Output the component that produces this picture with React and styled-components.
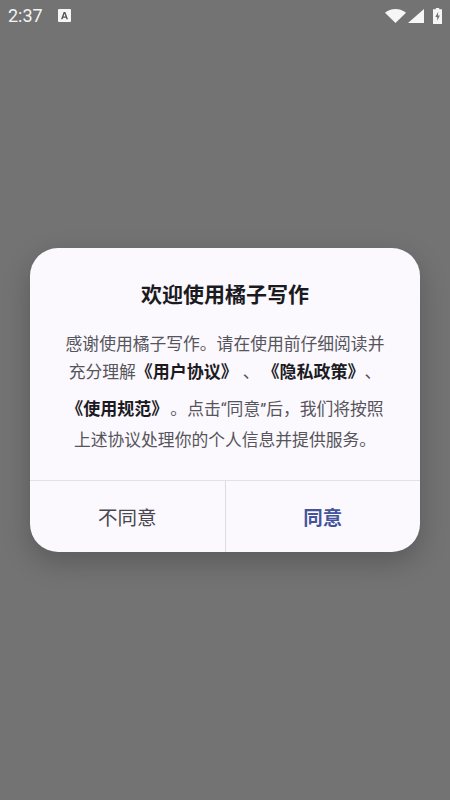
import React from "react"
import styled, { createGlobalStyle } from "styled-components"

const cjk = `Roboto, "Noto Sans CJK SC", sans-serif`

const Global = createGlobalStyle`
  html, body {
    margin: 0;
    padding: 0;
    background: #737373;
  }
`

const Screen = styled.div`
  width: 450px;
  height: 800px;
  background: #737373;
  display: flex;
  flex-direction: column;
  font-family: ${cjk};
  overflow: hidden;
`

const StatusBar = styled.div`
  height: 32px;
  flex: none;
  display: flex;
  align-items: center;
  padding: 0 8px 1px 8px;
  box-sizing: border-box;
  color: #f4f4f4;
`

const Time = styled.span`
  font-family: Roboto, sans-serif;
  font-size: 18px;
  width: 50px;
`

const StatusIcons = styled.div`
  margin-left: auto;
  display: flex;
  align-items: center;
`

const Center = styled.div`
  flex: 1;
  display: flex;
  justify-content: center;
  padding-top: 216px;
`

const Dialog = styled.div`
  width: 390px;
  height: 304px;
  border-radius: 28px;
  background: #fbf8fe;
  box-shadow: 0 10px 28px rgba(0, 0, 0, 0.22);
  display: flex;
  flex-direction: column;
  overflow: hidden;
`

const Title = styled.h1`
  margin: 0;
  padding-top: 32px;
  height: 30px;
  line-height: 30px;
  text-align: center;
  font-size: 21px;
  font-weight: 700;
  color: #1b1b1f;
`

const Body = styled.div`
  padding-top: 19px;
  flex: 1;
`

const Line = styled.div`
  height: ${p => p.$h}px;
  line-height: ${p => p.$h}px;
  text-align: center;
  font-size: 16.8px;
  color: #55555b;
  white-space: nowrap;
  text-spacing-trim: space-all;
`

const Strong = styled.b`
  font-weight: 700;
  color: #1b1b1f;
  font-size: 17px;
  margin-left: ${p => p.$before || 0}px;
  margin-right: ${p => p.$after || 0}px;
`

const Actions = styled.div`
  height: 71px;
  flex: none;
  display: flex;
  border-top: 1px solid #e3e1e7;
`

const Action = styled.div`
  flex: 1;
  display: flex;
  align-items: center;
  justify-content: center;
  font-size: 19.5px;
  font-weight: ${p => (p.$primary ? 700 : 400)};
  color: ${p => (p.$primary ? "#45549a" : "#47474d")};
  & + & {
    border-left: 1px solid #dddbe0;
  }
`

const Wifi = () => (
  <svg width="21" height="14" viewBox="0 0 21 14" style={{ marginRight: 2 }}>
    <path d="M0 3.800C2.800 1.400 6.400 0 10.500 0s7.700 1.400 10.500 3.800L10.500 14z" fill="#f6f6f6" />
  </svg>
)

const Signal = () => (
  <svg width="16" height="14" viewBox="0 0 16 14" style={{ marginRight: 9 }}>
    <path d="M16 0v14H0z" fill="#f6f6f6" />
  </svg>
)

const Battery = () => (
  <svg width="9" height="16" viewBox="0 0 9 16">
    <path
      fillRule="evenodd"
      d="M2.800 0h3.400v1.300H9V16H0V1.300h2.800zM5.200 3.800 2.300 9h1.900v3.800L6.900 7.500H5z"
      fill="#f6f6f6"
    />
  </svg>
)

const InputIcon = () => (
  <svg width="13" height="13" viewBox="0 0 12 12">
    <rect width="12" height="12" rx="1" fill="#f6f6f6" />
    <path d="M2.800 9.500 5.200 2.800h1.600l2.400 6.700H7.800l-.5-1.500H4.700l-.5 1.500zM5.100 6.900h1.800L6 4.200z" fill="#555" />
  </svg>
)

const App = () => (
  <>
    <Global />
    <Screen>
      <StatusBar>
        <Time>2:37</Time>
        <InputIcon />
        <StatusIcons>
          <Wifi />
          <Signal />
          <Battery />
        </StatusIcons>
      </StatusBar>
      <Center>
        <Dialog>
          <Title>欢迎使用橘子写作</Title>
          <Body>
            <Line $h={30}>感谢使用橘子写作。请在使用前仔细阅读并</Line>
            <Line $h={26}>
              充分理解<Strong $after={5}>《用户协议》</Strong>、<Strong $before={3}>《隐私政策》</Strong>、
            </Line>
            <Line $h={48}>
              <Strong $after={2}>《使用规范》</Strong>。点击“同意”后，我们将按照
            </Line>
            <Line $h={14}>上述协议处理你的个人信息并提供服务。</Line>
          </Body>
          <Actions>
            <Action>不同意</Action>
            <Action $primary>同意</Action>
          </Actions>
        </Dialog>
      </Center>
    </Screen>
  </>
)

export default App
